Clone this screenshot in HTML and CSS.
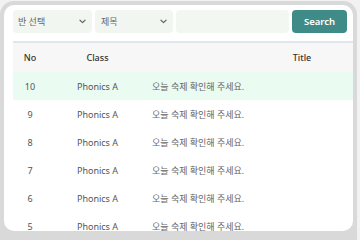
FILE: index.html
```html
<!DOCTYPE html>
<html lang="ko">
	<head>
		<meta charset="utf-8">
		<title>숙제 목록</title>
		<link rel="stylesheet" href="styles.css">
	</head>
	<body>
	<div class="device">
		<div class="screen">
			<div class="toolbar">
				<div class="select select-class">
					<span>반 선택</span>
					<svg class="chevron" width="7" height="5" viewBox="0 0 7 5"><path d="M1 1.2 L3.5 3.6 L6 1.2" /></svg>
				</div>
				<div class="select select-field">
					<span>제목</span>
					<svg class="chevron" width="7" height="5" viewBox="0 0 7 5"><path d="M1 1.2 L3.5 3.6 L6 1.2" /></svg>
				</div>
				<div class="search-input"></div>
				<button class="search-btn">Search</button>
			</div>

			<table class="list">
				<thead>
					<tr>
						<td class="col-no">No</td>
						<td class="col-class">Class</td>
						<td class="col-title">Title</td>
					</tr>
				</thead>
				<tbody>
					<tr class="active">
						<td class="col-no">10</td>
						<td class="col-class">Phonics A</td>
						<td class="col-title">오늘 숙제 확인해 주세요.</td>
					</tr>
					<tr>
						<td class="col-no">9</td>
						<td class="col-class">Phonics A</td>
						<td class="col-title">오늘 숙제 확인해 주세요.</td>
					</tr>
					<tr>
						<td class="col-no">8</td>
						<td class="col-class">Phonics A</td>
						<td class="col-title">오늘 숙제 확인해 주세요.</td>
					</tr>
					<tr>
						<td class="col-no">7</td>
						<td class="col-class">Phonics A</td>
						<td class="col-title">오늘 숙제 확인해 주세요.</td>
					</tr>
					<tr>
						<td class="col-no">6</td>
						<td class="col-class">Phonics A</td>
						<td class="col-title">오늘 숙제 확인해 주세요.</td>
					</tr>
					<tr>
						<td class="col-no">5</td>
						<td class="col-class">Phonics A</td>
						<td class="col-title">오늘 숙제 확인해 주세요.</td>
					</tr>
				</tbody>
			</table>
		</div>
	</div>
	</body>
</html>
```

FILE: styles.css
```css
body
{
	margin: 0;
	padding: 0;
	background: #f2f2f2;
	font: 9px "Noto Sans", "Noto Sans CJK KR", sans-serif;
	color: #555;
}

.device
{
	box-sizing: border-box;
	width: 357px;
	height: 239px;
	margin-top: 1px;
	padding: 4px;
	background: #d9d9d9;
	border-radius: 14px 14px 0 0;
}

.screen
{
	box-sizing: border-box;
	height: 226px;
	padding: 5px 0 0 9px;
	background: #fff;
	border-radius: 10px;
	overflow: hidden;
}

.toolbar
{
	display: flex;
	gap: 3px;
	height: 23px;
}

.select
{
	box-sizing: border-box;
	display: flex;
	align-items: center;
	justify-content: space-between;
	padding: 0 6px 0 5px;
	background: #f1f6f0;
	border-radius: 4px;
	color: #666;
}
.select-class { width: 79px; }
.select-field { width: 78px; padding-left: 6px; }

.chevron path
{
	fill: none;
	stroke: #666;
	stroke-width: 1.2;
	stroke-linecap: round;
	stroke-linejoin: round;
}

.search-input
{
	width: 113px;
	background: #f3f7f1;
	border-radius: 4px;
}

.search-btn
{
	width: 55px;
	margin: 0;
	padding: 0;
	border: none;
	border-radius: 4px;
	background: #3f8b87;
	color: #fff;
	font: 600 9.5px "Noto Sans", sans-serif;
}

table.list
{
	width: 443px;
	margin-top: 8px;
	border-collapse: collapse;
	border-spacing: 0;
	border-top: 2px solid #dfe6ec;
	table-layout: fixed;
}

td
{
	padding: 0 4px;
	white-space: nowrap;
}

thead tr
{
	height: 30px;
	background: #f7f7f7;
}
thead td
{
	color: #333;
	font-weight: 500;
}

tbody tr { height: 28px; }
tbody tr.active { background: #eafbf1; }

td.col-no { width: 26px; text-align: center; }
td.col-class { width: 93px; text-align: center; }
td.col-title { width: 300px; text-align: left; color: #666; }
thead td.col-title { text-align: center; color: #333; }
```
